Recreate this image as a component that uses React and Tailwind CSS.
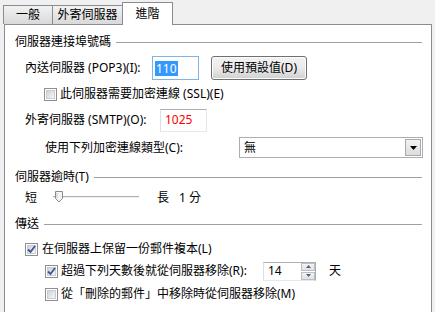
import React from 'react';

const font = "font-['Noto_Sans','Noto_Sans_CJK_TC',sans-serif]";

function Check({ checked }) {
  return (
    <span className="relative flex h-[13px] w-[13px] shrink-0 items-center justify-center border border-[#8e8f8f] bg-white">
      <span className="h-[9px] w-[9px] border border-[#c9ccd1] bg-gradient-to-br from-[#cfd2d7] to-[#f7f7f7]" />
      {checked && (
        <svg className="absolute left-0 top-0" width="11" height="11" viewBox="0 0 11 11">
          <path d="M2 5.5 L4.5 8 L9 2" fill="none" stroke="#3a5591" strokeWidth="1.8" />
        </svg>
      )}
    </span>
  );
}

function Section({ title, className }) {
  return (
    <div className={`flex h-[16px] items-center pl-[10px] pr-[9px] ${className}`}>
      <span>{title}</span>
      <span className="ml-[5px] h-px flex-1 bg-[#a0a0a0]" />
    </div>
  );
}

function Tab({ label, active, width }) {
  if (active) {
    return (
      <div
        className={`relative z-10 -mb-px flex h-[23px] items-start justify-center border border-b-0 border-[#898c95] bg-white pt-[3px] ${width}`}
      >
        {label}
      </div>
    );
  }
  return (
    <div
      className={`-mr-px flex h-[19px] items-center justify-center border border-b-0 border-[#898c95] bg-gradient-to-b from-[#f2f2f2] to-[#d9d9d9] ${width}`}
    >
      {label}
    </div>
  );
}

export default function App() {
  return (
    <div className={`h-[312px] w-[435px] overflow-hidden bg-[#f0f0f0] text-[12px] leading-[16px] text-black ${font}`}>
      {/* Tabs */}
      <div className="flex items-end pl-[3px] pt-[2px]">
        <Tab label="一般" width="w-[50px]" />
        <Tab label="外寄伺服器" width="w-[71px]" />
        <Tab label="進階" width="w-[51px]" active />
      </div>

      {/* Panel */}
      <div className="ml-[4px] h-[300px] w-[428px] border border-[#898c95] bg-white">
        <Section title="伺服器連接埠號碼" className="mt-[9px]" />

        <div className="mt-[6px] flex h-[24px] items-center pl-[20px]">
          <span className="w-[127px]">內送伺服器 (POP3)(I):</span>
          <div className="flex h-[24px] w-[47px] items-center border border-[#7eb4ea] bg-white pl-[2px]">
            <span className="bg-[#3399ff] px-px leading-[15px] text-white">110</span>
          </div>
          <button className="ml-[12px] flex h-[24px] w-[96px] items-center justify-center rounded-[3px] border border-[#707070] bg-gradient-to-b from-[#f2f2f2] via-[#ebebeb] to-[#cfcfcf] leading-[16px] shadow-[inset_0_0_0_1px_#fcfcfc]">
            使用預設值(D)
          </button>
        </div>

        <div className="mt-[5px] flex h-[18px] items-center gap-[3px] pl-[39px]">
          <Check />
          <span>此伺服器需要加密連線 (SSL)(E)</span>
        </div>

        <div className="mt-[5px] flex h-[24px] items-center pl-[20px]">
          <span className="w-[135px]">外寄伺服器 (SMTP)(O):</span>
          <div className="flex h-[23px] w-[47px] items-center border border-[#abadb3] border-b-[#e3e9ef] border-l-[#dbdfe6] border-r-[#e3e9ef] bg-white pl-[4px] text-[#ff0000]">
            1025
          </div>
        </div>

        <div className="mt-[5px] flex h-[21px] items-center pl-[40px]">
          <span className="w-[194px]">使用下列加密連線類型(C):</span>
          <div className="flex h-[21px] w-[184px] items-center border border-[#abadb3] bg-white pl-[4px]">
            <span className="flex-1">無</span>
            <span className="mr-px flex h-[17px] w-[16px] items-center justify-center border border-[#a9a9a9] bg-gradient-to-b from-[#f3f3f3] to-[#dcdcdc]">
              <svg width="7" height="4" viewBox="0 0 7 4">
                <path d="M0 0 H7 L3.5 4 Z" fill="#000" />
              </svg>
            </span>
          </div>
        </div>

        <Section title="伺服器逾時(T)" className="mt-[11px]" />

        <div className="mt-[4px] flex h-[18px] items-center pl-[20px]">
          <span className="w-[28px]">短</span>
          <div className="relative h-[18px] w-[86px]">
            <span className="absolute left-0 right-0 top-[7px] h-px bg-[#b0b0b0]" />
            <span className="absolute left-0 right-0 top-[8px] h-px bg-[#eeeeee]" />
            <svg className="absolute left-[1px] top-[2px]" width="10" height="12" viewBox="0 0 10 12">
              <path d="M1.5 0.5 H8.5 V7.5 L5 11 L1.5 7.5 Z" fill="#f4f4f4" stroke="#8a8a8a" />
              <path d="M3 2 V7" stroke="#c8c8c8" />
            </svg>
          </div>
          <span className="ml-[18px]">長</span>
          <span className="ml-[10px]">1 分</span>
        </div>

        <Section title="傳送" className="mt-[9px]" />

        <div className="mt-[8px] flex h-[18px] items-center gap-[4px] pl-[20px]">
          <Check checked />
          <span>在伺服器上保留一份郵件複本(L)</span>
        </div>

        <div className="mt-[3px] flex h-[20px] items-center pl-[40px]">
          <Check checked />
          <span className="ml-[3px] w-[202px]">超過下列天數後就從伺服器移除(R):</span>
          <div className="flex h-[19px] w-[53px] items-center border border-[#abadb3] border-b-[#e3e9ef] border-l-[#dbdfe6] bg-white pl-[4px]">
            <span className="flex-1">14</span>
            <span className="flex h-[17px] w-[14px] flex-col">
              <span className="flex h-[8px] items-center justify-center border border-[#b9bfc8] bg-gradient-to-b from-[#f4f4f4] to-[#e1e1e1]">
                <svg width="5" height="3" viewBox="0 0 5 3"><path d="M0 3 L2.5 0 L5 3 Z" fill="#4d6185" /></svg>
              </span>
              <span className="mt-px flex h-[8px] items-center justify-center border border-[#b9bfc8] bg-gradient-to-b from-[#f4f4f4] to-[#e1e1e1]">
                <svg width="5" height="3" viewBox="0 0 5 3"><path d="M0 0 L5 0 L2.5 3 Z" fill="#4d6185" /></svg>
              </span>
            </span>
          </div>
          <span className="ml-[13px]">天</span>
        </div>

        <div className="mt-[4px] flex h-[18px] items-center gap-[3px] pl-[40px]">
          <Check />
          <span>從「刪除的郵件」中移除時從伺服器移除(M)</span>
        </div>
      </div>
    </div>
  );
}
